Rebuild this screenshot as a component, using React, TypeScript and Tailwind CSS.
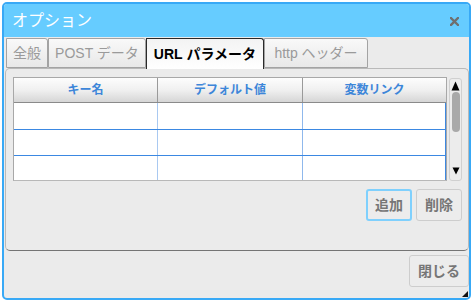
import React from "react";

const font = "font-['Liberation_Sans','Noto_Sans_CJK_JP',sans-serif]";

function Tab({ label, w, active }: { label: React.ReactNode; w: number; active?: boolean }) {
  if (active) {
    return (
      <div
        className="h-[31px] flex items-center justify-center border border-b-0 border-[#2a2a2a] rounded-tr-[3px] bg-gradient-to-b from-[#f3f3f3] to-white text-[14px] text-black"
        style={{ width: w }}
      >
        {label}
      </div>
    );
  }
  return (
    <div
      className="h-[30px] flex items-center justify-center border border-[#a3a3a3] rounded-tr-[3px] bg-gradient-to-b from-[#f9f9f9] to-[#e8e8e8] text-[14px] text-[#9a9a9a]"
      style={{ width: w }}
    >
      {label}
    </div>
  );
}

export default function App() {
  const rows = [0, 1, 2];
  return (
    <div className={`w-[474px] h-[304px] bg-white pt-[2px] pl-[2px] ${font}`}>
      <div className="relative w-[469px] h-[298px] border-2 border-[#38a9f6] rounded-[5px] overflow-hidden bg-[#ebebeb] flex flex-col">
        {/* title */}
        <div className="h-[33px] shrink-0 bg-[#66ccff] flex items-center justify-between pl-[8px] pr-[10px]">
          <span className="text-[16px] text-white leading-none">オプション</span>
          <svg width="9" height="9" viewBox="0 0 9 9" className="mt-[1px]">
            <path d="M1 1 L8 8 M8 1 L1 8" stroke="#6f6f6f" strokeWidth="2.4" strokeLinecap="square" />
          </svg>
        </div>
        {/* tabs */}
        <div className="relative z-10 mt-[1px] pl-[2px] h-[30px] flex items-start shrink-0">
          <Tab label="全般" w={42} />
          <Tab label="POST データ" w={98} />
          <Tab label={<span><b>URL</b> <b className="font-semibold">パラメータ</b></span>} w={118} active />
          <Tab label="http ヘッダー" w={104} />
        </div>
        {/* panel */}
        <div className="ml-[1px] w-[464px] h-[183px] shrink-0 border border-[#b9b9b9] border-b-[#747474] rounded-[5px] bg-[#ebebeb] pt-[8px] pl-[7px] pr-[6px] flex flex-col">
          <div className="flex items-start">
            <div className="w-[434px] h-[104px] border border-t-[#a8a8a8] border-l-[#a8a8a8] border-r-[#a8a8a8] border-b-[#b8b8b8] flex flex-col bg-white">
              <div className="h-[25px] shrink-0 grid grid-cols-[143px_145px_144px] bg-gradient-to-b from-[#fdfdfd] via-[#f0f0f0] to-[#d6d6d6] border-b border-[#8a8a8a] text-[12px] font-bold text-[#3d86d9]">
                <div className="flex items-center justify-center">キー名</div>
                <div className="flex items-center justify-center border-l border-[#9a9a9a]">デフォルト値</div>
                <div className="flex items-center justify-center border-l border-[#9a9a9a]">変数リンク</div>
              </div>
              <div className="flex-1 overflow-hidden border-r border-[#3d88e0]">
                {rows.map((r) => (
                  <div
                    key={r}
                    className={`h-[26px] grid grid-cols-[143px_145px_144px] ${r > 0 ? "border-t border-[#3b88e2]" : ""}`}
                  >
                    <div />
                    <div className="border-l border-[#a9c9f1]" />
                    <div className="border-l border-[#8fb8ec]" />
                  </div>
                ))}
              </div>
            </div>
            <div className="ml-[2px] mt-[1px] w-[13px] h-[103px] border border-[#d0d0d0] rounded-[3px] bg-[#ececec] flex flex-col items-center">
              <svg width="9" height="10" viewBox="0 0 9 10" className="mt-[2px]">
                <path d="M4.5 0.5 L8.5 9.5 L0.5 9.5 Z" fill="#000" />
              </svg>
              <div className="mt-[1px] w-[8px] h-[40px] rounded-[4px] bg-[#a9a9a9]" />
              <div className="flex-1" />
              <svg width="8" height="8" viewBox="0 0 8 8" className="mb-[5px]">
                <path d="M0.5 0.5 L7.5 0.5 L4 7.5 Z" fill="#000" />
              </svg>
            </div>
          </div>
          <div className="mt-[8px] flex justify-end gap-[4px] pr-0">
            <button className="w-[46px] h-[32px] rounded-[3px] border-2 border-[#7fd0fd] bg-[#ececec] text-[14px] font-bold text-[#767676]">
              追加
            </button>
            <button className="w-[46px] h-[32px] rounded-[3px] border border-[#cdcdcd] bg-[#ececec] text-[14px] font-bold text-[#767676]">
              削除
            </button>
          </div>
        </div>
        {/* footer */}
        <div className="mt-[4px] flex justify-end">
          <button className="w-[60px] h-[32px] rounded-[3px] border border-[#cdcdcd] bg-[#ececec] text-[14px] font-bold text-[#767676]">
            閉じる
          </button>
        </div>
        <svg width="6" height="6" viewBox="0 0 6 6" className="absolute right-[1px] bottom-[1px]">
          <path d="M6 0 L6 6 L0 6 Z" fill="#111" />
        </svg>
      </div>
    </div>
  );
}
